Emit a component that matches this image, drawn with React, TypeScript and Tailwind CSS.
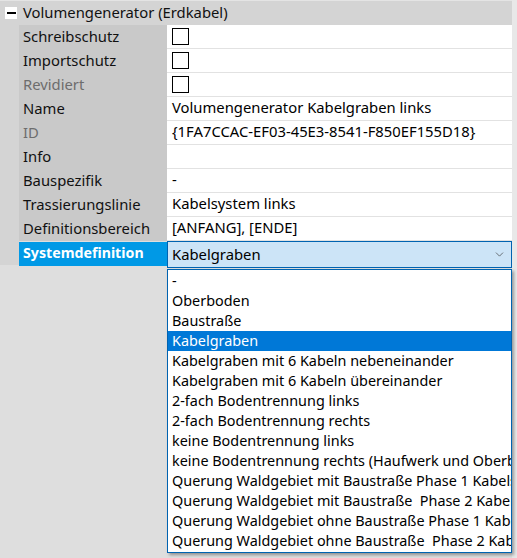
import { ChevronDown } from "lucide-react";

type Row = {
  label: string;
  value?: string;
  check?: boolean;
  disabled?: boolean;
};

const rows: Row[] = [
  { label: "Schreibschutz", check: true },
  { label: "Importschutz", check: true },
  { label: "Revidiert", check: true, disabled: true },
  { label: "Name", value: "Volumengenerator Kabelgraben links" },
  { label: "ID", value: "{1FA7CCAC-EF03-45E3-8541-F850EF155D18}", disabled: true },
  { label: "Info", value: "" },
  { label: "Bauspezifik", value: "-" },
  { label: "Trassierungslinie", value: "Kabelsystem links" },
  { label: "Definitionsbereich", value: "[ANFANG], [ENDE]" },
];

const options = [
  "-",
  "Oberboden",
  "Baustraße",
  "Kabelgraben",
  "Kabelgraben mit 6 Kabeln nebeneinander",
  "Kabelgraben mit 6 Kabeln übereinander",
  "2-fach Bodentrennung links",
  "2-fach Bodentrennung rechts",
  "keine Bodentrennung links",
  "keine Bodentrennung rechts (Haufwerk und Oberboden)",
  "Querung Waldgebiet mit Baustraße Phase 1 Kabelsystem",
  "Querung Waldgebiet mit Baustraße  Phase 2 Kabelsystem",
  "Querung Waldgebiet ohne Baustraße Phase 1 Kabelsystem",
  "Querung Waldgebiet ohne Baustraße  Phase 2 Kabelsystem",
];

export default function App() {
  const selected = "Kabelgraben";

  return (
    <div
      className="w-[517px] h-[558px] bg-[#dedede] flex overflow-hidden text-[14.8px] text-[#111]"
      style={{ fontFamily: '"Noto Sans", "Open Sans", sans-serif' }}
    >
      <div className="w-[512px] flex flex-col">
        {/* Kategorie-Kopf */}
        <div className="h-[25px] bg-[#d4d4d4] border-t border-[#e4e4e4] flex items-center pb-[2px]">
          <div className="w-[12px] h-[12px] bg-white ml-[5px] mr-[6px] mt-[2px] flex items-center justify-center">
            <div className="w-[9px] h-[2px] bg-black" />
          </div>
          <span className="whitespace-nowrap">Volumengenerator (Erdkabel)</span>
        </div>

        {rows.map((r) => (
          <div key={r.label} className="flex h-[24px]">
            <div className="w-[19px] bg-[#d4d4d4]" />
            <div
              className={`w-[148px] bg-[#c9c9c9] pl-[4px] pb-[2px] flex items-center whitespace-nowrap ${
                r.disabled ? "text-[#6d6d6d]" : ""
              }`}
            >
              {r.label}
            </div>
            <div className="flex-1 bg-white border-b border-[#e2e2e2] pl-[5px] flex items-center whitespace-nowrap overflow-hidden">
              {r.check ? (
                <div className="w-[17px] h-[17px] border border-black bg-white" />
              ) : (
                <span className="text-black pb-[2px]">{r.value}</span>
              )}
            </div>
          </div>
        ))}

        {/* Systemdefinition mit offener Auswahlliste */}
        <div className="relative flex h-[27px]">
          <div className="w-[19px] h-[24px] bg-[#d4d4d4]" />
          <div className="w-[148px] h-[24px] mt-[1px] bg-[#0099e6] pl-[4px] pb-[3px] flex items-center font-bold text-[14.2px] text-white whitespace-nowrap">
            Systemdefinition
          </div>
          <div className="flex-1 bg-[#cce4f7] border border-[#0063b1] pl-[4px] pr-[5px] flex items-center justify-between">
            <span className="text-black">{selected}</span>
            <ChevronDown size={13} strokeWidth={1.2} className="text-[#333]" />
          </div>

          <div className="absolute left-[167px] top-[28px] w-[345px] bg-white border border-[#0063b1] shadow-[2px_2px_3px_rgba(0,0,0,0.35)] py-[1px] overflow-hidden text-[14.4px]">
            {options.map((o) => (
              <div
                key={o}
                className={`h-[20px] pl-[4px] pb-[1px] flex items-center whitespace-pre overflow-hidden ${
                  o === selected ? "bg-[#0078d7] text-white" : "text-black"
                }`}
              >
                {o}
              </div>
            ))}
          </div>
        </div>
      </div>
      <div className="w-[5px] bg-[#e8e8e8]" />
    </div>
  );
}
